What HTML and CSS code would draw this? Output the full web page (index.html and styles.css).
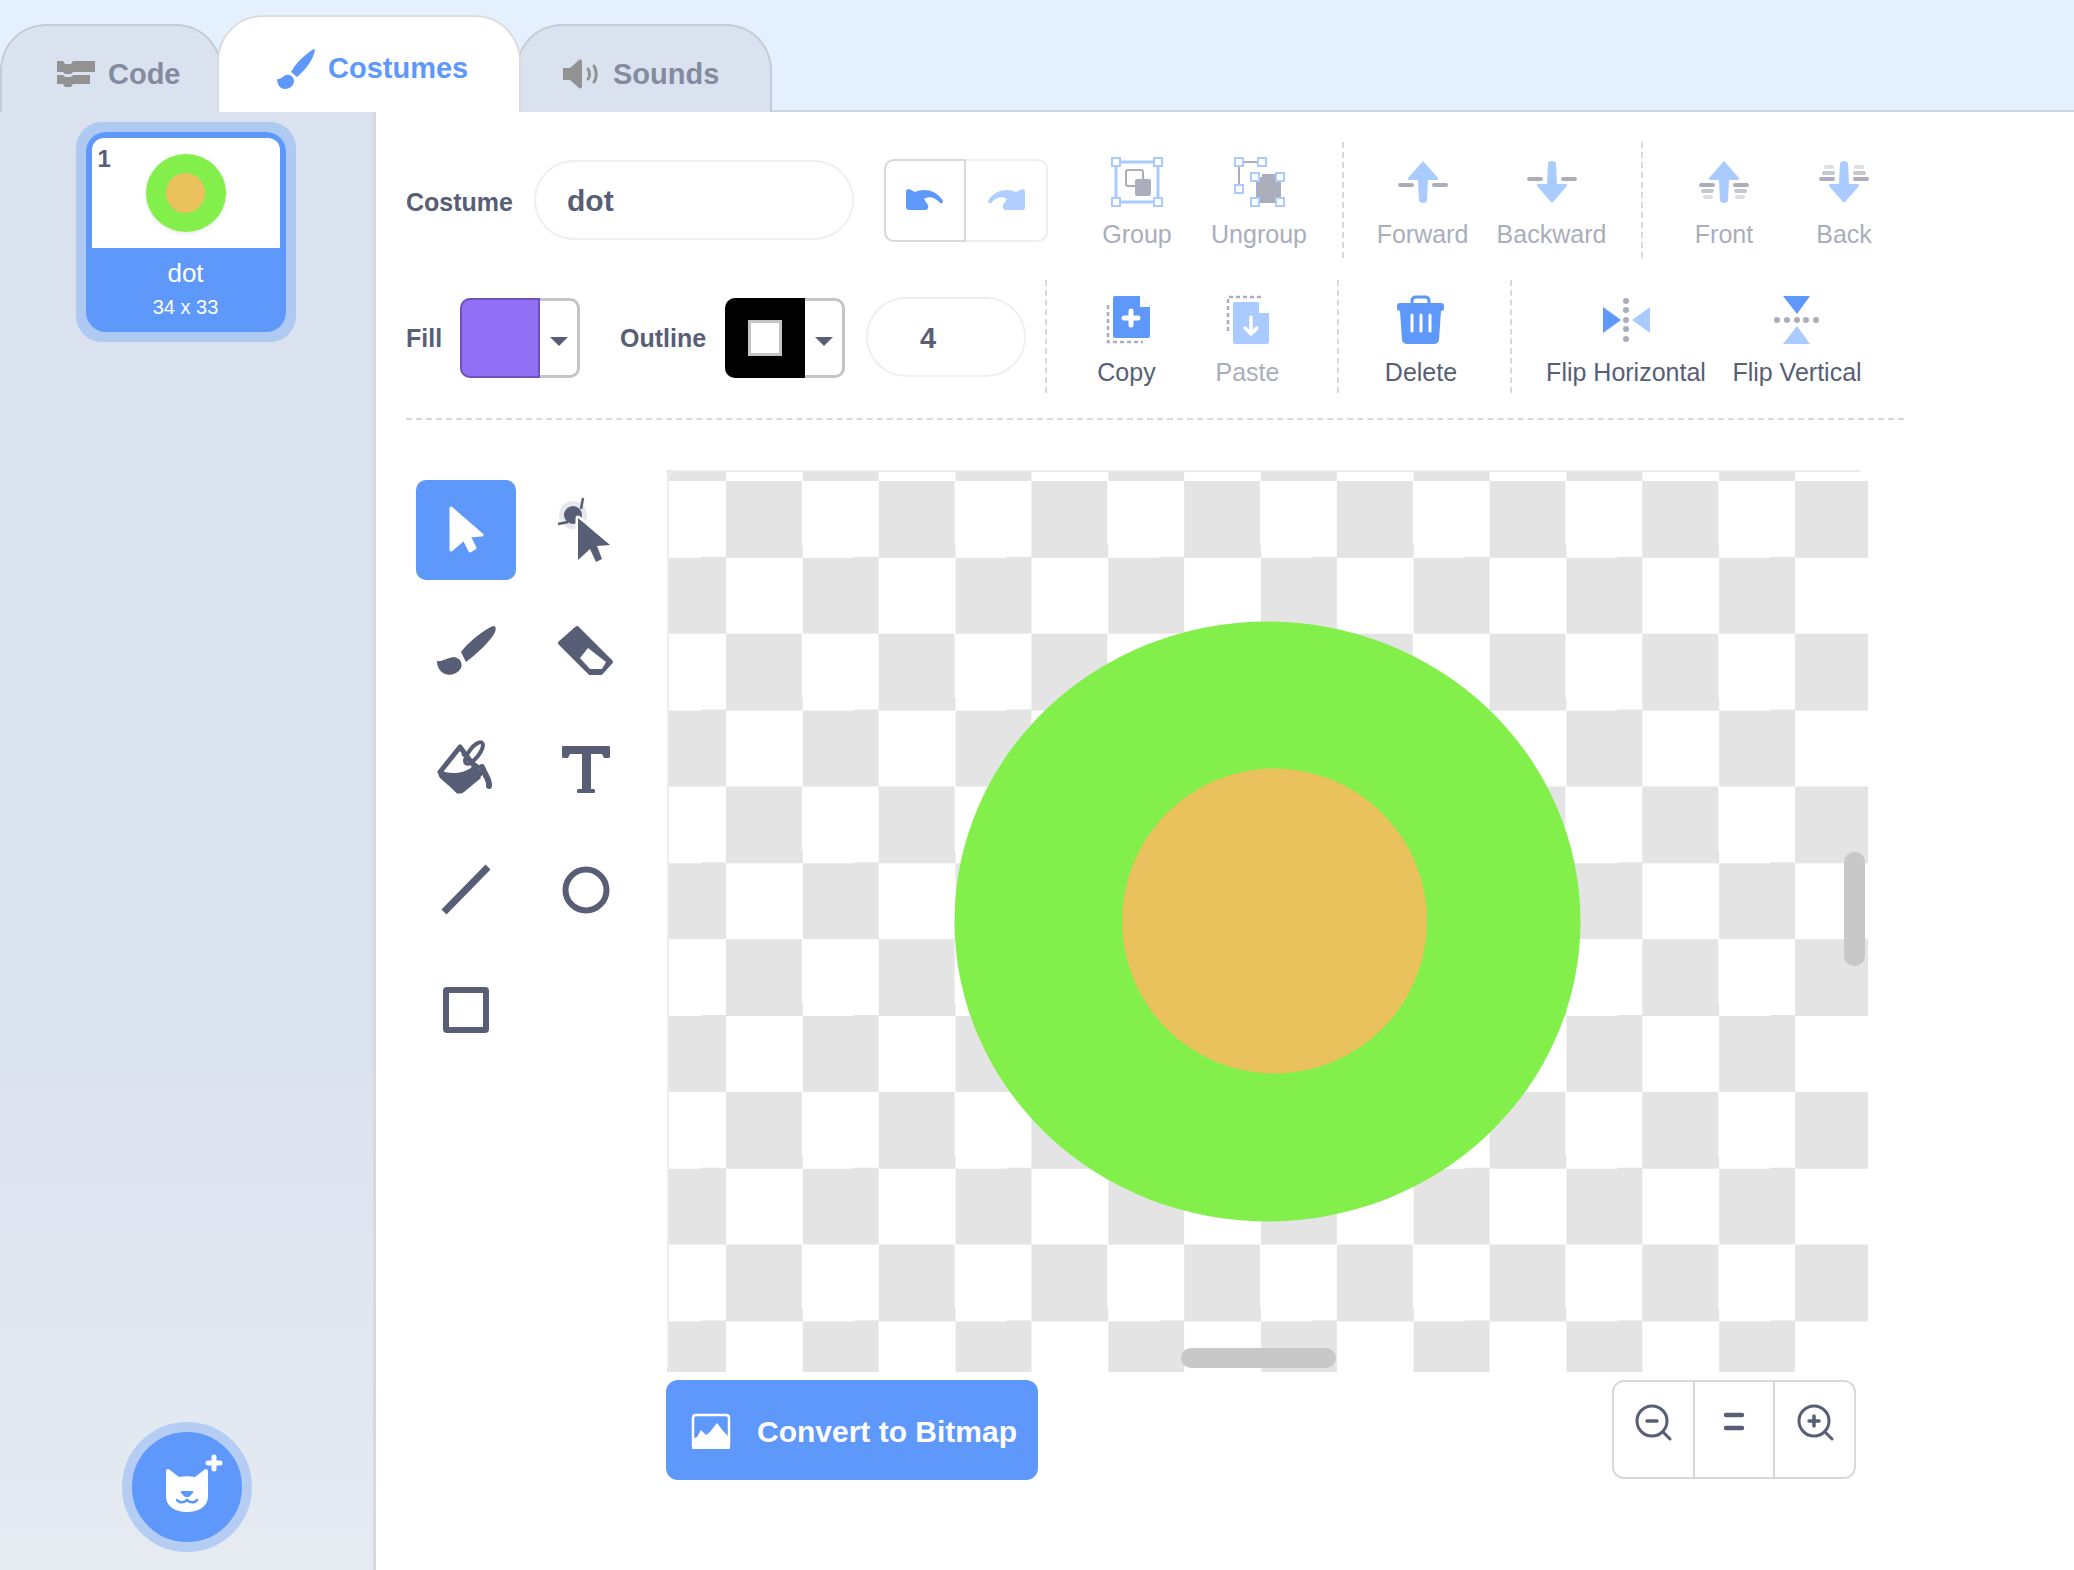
FILE: index.html
```html
<!DOCTYPE html>
<html lang="en">

<head>
    <meta charset="UTF-8">
    <title>Costumes</title>
    <link rel="stylesheet" href="styles.css">
</head>

<body>
    <div class="tabs">
        <div class="tab tab-code">
            <svg class="tab-icon" width="40" height="28" viewBox="0 0 40 28"><path fill="#929292" d="M1 1h6l2 3h6l2-3h22v11H17l-2 2H9l-2-2H1zM1 15h6l2 2h6l2-2h17v9H17l-2 3H9l-2-3H1z"/></svg>
            <span>Code</span>
        </div>
        <div class="tab tab-active">
            <svg class="tab-icon" width="38" height="40" viewBox="0 0 38 40"><path fill="#5e98fb" d="M14 23C18 15 29 4 37 0c1 0 1 2 0 5-3 9-11 18-17 23z"/><path fill="#5e98fb" d="M0 30c3 1 6-3 9-4 4-1 8 2 8 6 0 5-5 8-9 8-5 0-8-5-8-10z"/></svg>
            <span>Costumes</span>
        </div>
        <div class="tab tab-sounds">
            <svg class="tab-icon" width="38" height="30" viewBox="0 0 38 30"><path fill="#929292" d="M0 9h7l9-8c2-1 3 0 3 2v24c0 2-1 3-3 2l-9-8H0z"/><path fill="none" stroke="#929292" stroke-width="3" stroke-linecap="round" d="M25 10c2 3 2 8 0 10M31 7c3 5 3 12 0 16"/></svg>
            <span>Sounds</span>
        </div>
    </div>

    <div class="main">
        <div class="sidebar">
            <div class="card-halo">
                <div class="card">
                    <div class="thumb">
                        <span class="thumb-num">1</span>
                        <div class="thumb-dot"><div class="thumb-core"></div></div>
                    </div>
                    <div class="card-name">dot</div>
                    <div class="card-size">34 x 33</div>
                </div>
            </div>
            <div class="add-btn">
                <svg width="110" height="110" viewBox="0 0 110 110">
                    <path fill="#fff" d="M34 40c0-3 2-4 4-2l9 7c5-1 11-1 16 0l9-7c2-2 4-1 4 2v24c0 11-10 16-21 16s-21-5-21-16z"/>
                    <path fill="#5e98fb" d="M50 59h10c1 0 2 1 1 2l-4 4h-4l-4-4c-1-1 0-2 1-2z"/>
                    <path fill="none" stroke="#5e98fb" stroke-width="2.5" stroke-linecap="round" d="M45 68c2 3 7 3 10 0 3 3 8 3 10 0"/>
                    <path fill="none" stroke="#fff" stroke-width="5" stroke-linecap="round" d="M82 25v12M76 31h12"/>
                </svg>
            </div>
        </div>

        <div class="editor">
            <div class="row row-one">
                <div class="label label-costume">Costume</div>
                <div class="pill pill-name">dot</div>
                <div class="undo">
                    <div class="undo-btn undo-on">
                        <svg width="40" height="24" viewBox="0 0 40 24"><path fill="#5e98fb" d="M1 4q0-3 3-3l2 1 4 2c8-4 21-3 28 9q0 3-3 2c-5-6-11-7-16-4l4 6q1 4-2 5H4q-3 0-3-3z"/></svg>
                    </div>
                    <div class="undo-btn">
                        <svg width="40" height="24" viewBox="0 0 40 24"><path fill="#b0ceff" d="M39 4q0-3-3-3l-2 1-4 2c-8-4-21-3-28 9q0 3 3 2c5-6 11-7 16-4l-4 6q-1 4 2 5h17q3 0 3-3z"/></svg>
                    </div>
                </div>

                <div class="tool-set set-group">
                    <div class="act act-122 off">
                        <svg width="60" height="50" viewBox="0 0 60 50">
                            <path fill="none" stroke="#a9cbff" stroke-width="3" d="M9 5h42v40H9z"/>
                            <g fill="#fff" stroke="#a9cbff" stroke-width="2"><rect x="5" y="1" width="8" height="8"/><rect x="47" y="1" width="8" height="8"/><rect x="5" y="41" width="8" height="8"/><rect x="47" y="41" width="8" height="8"/></g>
                            <rect x="19" y="13" width="17" height="16" rx="2" fill="#fff" stroke="#abaeba" stroke-width="2"/>
                            <rect x="28" y="22" width="16" height="17" rx="2" fill="#abaeba"/>
                        </svg>
                        <div>Group</div>
                    </div>
                    <div class="act act-122 off">
                        <svg width="60" height="50" viewBox="0 0 60 50">
                            <path fill="none" stroke="#abaeba" stroke-width="2" d="M10 5h24M10 5v28"/>
                            <path fill="#abaeba" d="M27 20h6v-3h14v3h5v21h-5v5H30v-5h-3z"/>
                            <g fill="#fff" stroke="#a9cbff" stroke-width="2"><rect x="6" y="1" width="8" height="8"/><rect x="29" y="1" width="8" height="8"/><rect x="6" y="28" width="8" height="8"/><rect x="22" y="16" width="8" height="8"/><rect x="47" y="16" width="8" height="8"/><rect x="22" y="41" width="8" height="8"/><rect x="47" y="41" width="8" height="8"/></g>
                        </svg>
                        <div>Ungroup</div>
                    </div>
                </div>

                <div class="tool-set set-order">
                    <div class="act act-129 off">
                        <svg width="60" height="50" viewBox="0 0 60 50">
                            <path fill="none" stroke="#abaeba" stroke-width="4" stroke-linecap="round" d="M7 28h12M41 28h12"/>
                            <path fill="#a9cbff" d="M30 4l15 17q1 2-2 2h-8l-1 21q-1 2-4 2t-4-2l-1-21h-8q-3 0-2-2z"/>
                        </svg>
                        <div>Forward</div>
                    </div>
                    <div class="act act-129 off">
                        <svg width="60" height="50" viewBox="0 0 60 50">
                            <path fill="none" stroke="#abaeba" stroke-width="4" stroke-linecap="round" d="M7 22h12M41 22h12"/>
                            <path fill="#a9cbff" d="M30 46L15 29q-1-2 2-2h8l1-21q1-2 4-2t4 2l1 21h8q3 0 2 2z"/>
                        </svg>
                        <div>Backward</div>
                    </div>
                </div>

                <div class="tool-set set-layer">
                    <div class="act act-120 off">
                        <svg width="60" height="50" viewBox="0 0 60 50">
                            <path fill="none" stroke="#abaeba" stroke-width="4" stroke-linecap="round" d="M7 28h12M41 28h12"/>
                            <path fill="none" stroke="#c4c7d0" stroke-width="4" stroke-linecap="round" d="M9 34h9M42 34h9"/>
                            <path fill="none" stroke="#dcdee3" stroke-width="4" stroke-linecap="round" d="M11 40h6M43 40h6"/>
                            <path fill="#a9cbff" d="M30 4l15 17q1 2-2 2h-8l-1 21q-1 2-4 2t-4-2l-1-21h-8q-3 0-2-2z"/>
                        </svg>
                        <div>Front</div>
                    </div>
                    <div class="act act-120 off">
                        <svg width="60" height="50" viewBox="0 0 60 50">
                            <path fill="none" stroke="#dcdee3" stroke-width="4" stroke-linecap="round" d="M12 10h6M42 10h6"/>
                            <path fill="none" stroke="#c4c7d0" stroke-width="4" stroke-linecap="round" d="M10 16h9M41 16h9"/>
                            <path fill="none" stroke="#abaeba" stroke-width="4" stroke-linecap="round" d="M7 22h12M41 22h12"/>
                            <path fill="#a9cbff" d="M30 46L15 29q-1-2 2-2h8l1-21q1-2 4-2t4 2l1 21h8q3 0 2 2z"/>
                        </svg>
                        <div>Back</div>
                    </div>
                </div>
            </div>

            <div class="row row-two">
                <div class="label label-fill">Fill</div>
                <div class="swatch">
                    <div class="swatch-color color-purple"></div>
                    <div class="swatch-drop"><i class="caret"></i></div>
                </div>
                <div class="label label-outline">Outline</div>
                <div class="swatch">
                    <div class="swatch-color color-black"><i class="outline-hole"></i></div>
                    <div class="swatch-drop"><i class="caret"></i></div>
                </div>
                <div class="pill pill-num">4</div>

                <div class="tool-set set-clip">
                    <div class="act act-121">
                        <svg width="60" height="50" viewBox="0 0 60 50">
                            <path fill="#5e98fb" d="M18 1h25l10 11v29q0 2-2 2H18q-2 0-2-2V3q0-2 2-2z"/>
                            <path fill="#fff" d="M43 1l10 11H43z"/>
                            <path fill="none" stroke="#fff" stroke-width="5" stroke-linecap="round" d="M34 16v14M27 23h14"/>
                            <path fill="none" stroke="#abaeba" stroke-width="2.5" stroke-dasharray="4 3" d="M11 10v37h35"/>
                        </svg>
                        <div>Copy</div>
                    </div>
                    <div class="act act-121 off">
                        <svg width="60" height="50" viewBox="0 0 60 50">
                            <path fill="#a9cbff" d="M17 7h24l10 11v29q0 2-2 2H17q-2 0-2-2V9q0-2 2-2z"/>
                            <path fill="#fff" d="M41 7l10 11H41z"/>
                            <path fill="none" stroke="#fff" stroke-width="3.5" stroke-linecap="round" stroke-linejoin="round" d="M33 22v17M27 33l6 6 6-6"/>
                            <path fill="none" stroke="#abaeba" stroke-width="2.5" stroke-dasharray="4 3" d="M10 36V2h34"/>
                        </svg>
                        <div>Paste</div>
                    </div>
                </div>

                <div class="tool-set set-del">
                    <div class="act act-120">
                        <svg width="60" height="50" viewBox="0 0 60 50">
                            <path fill="none" stroke="#5e98fb" stroke-width="3" d="M21 9V6q0-4 4-4h9q4 0 4 4v3"/>
                            <path fill="#5e98fb" d="M9 8h41q3 0 3 3v2q0 3-3 3l-2 29q-1 4-5 4H16q-4 0-5-4L9 16q-3 0-3-3v-2q0-3 3-3z"/>
                            <path fill="none" stroke="#fff" stroke-width="3" stroke-linecap="round" d="M21 20v16M30 20v16M39 20v16"/>
                        </svg>
                        <div>Delete</div>
                    </div>
                </div>

                <div class="tool-set set-flip">
                    <div class="act act-172">
                        <svg width="60" height="50" viewBox="0 0 60 50">
                            <path fill="#5e98fb" d="M7 12l18 13-18 13z"/>
                            <path fill="#a9cbff" d="M54 12L36 25l18 13z"/>
                            <g fill="#abaeba"><circle cx="30" cy="6" r="3"/><circle cx="30" cy="15" r="3"/><circle cx="30" cy="25" r="3"/><circle cx="30" cy="34" r="3"/><circle cx="30" cy="44" r="3"/></g>
                        </svg>
                        <div>Flip Horizontal</div>
                    </div>
                    <div class="act act-170">
                        <svg width="60" height="50" viewBox="0 0 60 50">
                            <path fill="#5e98fb" d="M16 1h27L30 19z"/>
                            <path fill="#a9cbff" d="M16 49h27L30 31z"/>
                            <g fill="#abaeba"><circle cx="10" cy="25" r="3"/><circle cx="20" cy="25" r="3"/><circle cx="30" cy="25" r="3"/><circle cx="39" cy="25" r="3"/><circle cx="49" cy="25" r="3"/></g>
                        </svg>
                        <div>Flip Vertical</div>
                    </div>
                </div>
            </div>

            <div class="rule"></div>

            <div class="stage">
                <div class="tools">
                    <div class="tool tool-on">
                        <svg width="100" height="100" viewBox="0 0 100 100"><path fill="#fff" stroke="#fff" stroke-width="3" stroke-linejoin="round" d="M35 28l31 27-13 1 6 12-5 3-6-12-13 11z"/></svg>
                    </div>
                    <div class="tool">
                        <svg width="100" height="100" viewBox="0 0 100 100">
                            <circle cx="37" cy="35" r="14" fill="#e6e8ed"/>
                            <circle cx="37" cy="35" r="9" fill="#575e75"/>
                            <path fill="none" stroke="#575e75" stroke-width="2.5" d="M47 18l-2 11M22 44l10-2"/>
                            <path fill="#575e75" stroke="#fff" stroke-width="5" stroke-linejoin="round" d="M42 38l32 27-13 1 5 13-6 3-6-13-12 11z" paint-order="stroke"/>
                        </svg>
                    </div>
                    <div class="tool">
                        <svg width="100" height="100" viewBox="0 0 100 100">
                            <path fill="#575e75" d="M45 52c7-10 23-22 32-26 4 0 3 5 1 8-5 8-16 19-28 28z"/>
                            <path fill="#575e75" d="M21 61c5 1 9-3 17-4 6 1 9 6 7 11-3 6-11 8-16 6-5-2-8-7-8-13z"/>
                        </svg>
                    </div>
                    <div class="tool">
                        <svg width="100" height="100" viewBox="0 0 100 100">
                            <path fill="#575e75" stroke="#575e75" stroke-width="4" stroke-linejoin="round" d="M41 28L24 43l30 30h11l10-11z"/>
                            <path fill="#fff" d="M52 48l-8 10 10 11h12l4-7z"/>
                        </svg>
                    </div>
                    <div class="tool">
                        <svg width="100" height="100" viewBox="0 0 100 100">
                            <path fill="#575e75" d="M24 50c7 4 22 5 32-3l9 11-17 14c-3 2-5 2-8 0L24 58c-2-2-2-5 0-8z"/>
                            <path fill="none" stroke="#575e75" stroke-width="5" stroke-linejoin="round" d="M44 27L24 52l18 19 22-17z"/>
                            <ellipse cx="58" cy="33" rx="5" ry="13" transform="rotate(38 58 33)" fill="none" stroke="#575e75" stroke-width="4"/>
                            <path fill="none" stroke="#575e75" stroke-width="6" stroke-linecap="round" d="M66 47c2 7 8 12 7 19"/>
                            <path fill="none" stroke="#575e75" stroke-width="2.5" d="M46 34l20 15"/>
                        </svg>
                    </div>
                    <div class="tool">
                        <svg width="100" height="100" viewBox="0 0 100 100">
                            <path fill="#575e75" d="M27 26h46q1 0 1 1v10q0 1-2 1h-4l-2-4H55v35h3q1 0 1 2v1q0 1-1 1H42q-1 0-1-1v-1q0-2 1-2h4V34H34l-2 4h-4q-2 0-2-1V27q0-1 1-1z"/>
                        </svg>
                    </div>
                    <div class="tool">
                        <svg width="100" height="100" viewBox="0 0 100 100"><path stroke="#575e75" stroke-width="7" d="M28 72l44-45"/></svg>
                    </div>
                    <div class="tool">
                        <svg width="100" height="100" viewBox="0 0 100 100"><circle cx="50" cy="50" r="20.5" fill="none" stroke="#575e75" stroke-width="6"/></svg>
                    </div>
                    <div class="tool">
                        <svg width="100" height="100" viewBox="0 0 100 100"><rect x="30" y="30" width="40" height="40" rx="1" fill="none" stroke="#575e75" stroke-width="6"/></svg>
                    </div>
                </div>

                <div class="paper-col">
                    <div class="paper">
                        <div class="paper-edge"></div>
                        <svg class="art" width="1201" height="902" viewBox="0 0 1201 902">
                            <ellipse cx="600.5" cy="451.5" rx="313" ry="300" fill="#83ef4a"/>
                            <circle cx="607.5" cy="451" r="152.5" fill="#e9c25d"/>
                        </svg>
                        <div class="scroll-y"></div>
                        <div class="scroll-x"></div>
                    </div>
                    <div class="paper-foot">
                        <div class="convert">
                            <svg width="40" height="36" viewBox="0 0 40 36">
                                <path fill="none" stroke="#fff" stroke-width="2.5" d="M2 33V5q0-3 3-3h30q3 0 3 3v28"/>
                                <path fill="#fff" d="M1 26l5-2 4-7 5 5 4-3 7-9 6 8 4 4 3 4v8q0 3-3 3H4q-3 0-3-3z"/>
                            </svg>
                            <span>Convert to Bitmap</span>
                        </div>
                        <div class="zoom-group">
                            <div class="zoom-btn">
                                <svg width="40" height="40" viewBox="0 0 40 40">
                                    <circle cx="19" cy="20" r="15" fill="none" stroke="#575e75" stroke-width="3"/>
                                    <path fill="none" stroke="#575e75" stroke-width="3" stroke-linecap="round" d="M30 31l7 7"/>
                                    <path fill="none" stroke="#575e75" stroke-width="3.5" stroke-linecap="round" d="M14 20h10"/>
                                </svg>
                            </div>
                            <div class="zoom-btn">
                                <svg width="40" height="40" viewBox="0 0 40 40">
                                    <path fill="none" stroke="#575e75" stroke-width="4.5" stroke-linecap="round" d="M12 14h16M12 27h16"/>
                                </svg>
                            </div>
                            <div class="zoom-btn">
                                <svg width="40" height="40" viewBox="0 0 40 40">
                                    <circle cx="19" cy="20" r="15" fill="none" stroke="#575e75" stroke-width="3"/>
                                    <path fill="none" stroke="#575e75" stroke-width="3" stroke-linecap="round" d="M30 31l7 7"/>
                                    <path fill="none" stroke="#575e75" stroke-width="3.5" stroke-linecap="round" d="M14 20h10M19 15v10"/>
                                </svg>
                            </div>
                        </div>
                    </div>
                </div>
            </div>
        </div>
    </div>
</body>

</html>
```
FILE: styles.css
```css
*{
    box-sizing:border-box;
    margin:0;
    padding:0;
}
body{
    width:2074px;
    height:1570px;
    overflow:hidden;
    background:#fff;
    color:#575e75;
    font-family:"Liberation Sans",Arial,sans-serif;
}

/* tabs */
.tabs{
    display:flex;
    align-items:flex-end;
    height:112px;
    background:#e5f0ff;
    border-bottom:2px solid #ccd3de;
}
.tab{
    display:flex;
    align-items:center;
    height:88px;
    margin-bottom:-2px;
    padding-top:10px;
    background:#dae2ef;
    border:2px solid #c4cbd8;
    border-bottom:none;
    border-radius:46px 46px 0 0;
    color:#848b9e;
    font-size:29px;
    font-weight:bold;
}
.tab-icon{
    flex:none;
}
.tab-code{
    width:222px;
    padding-left:54px;
    gap:12px;
}
.tab-active{
    position:relative;
    z-index:2;
    width:304px;
    height:97px;
    margin-left:-5px;
    padding-top:8px;
    padding-left:58px;
    gap:13px;
    background:#fff;
    border-color:#dcdcdc;
    color:#5e98fb;
}
.tab-sounds{
    width:256px;
    margin-left:-5px;
    padding-left:45px;
    gap:12px;
}

.main{
    display:flex;
    height:1458px;
}

/* costume list */
.sidebar{
    position:relative;
    display:flex;
    flex-direction:column;
    align-items:center;
    justify-content:space-between;
    width:376px;
    padding:10px 2px 18px 0;
    background:linear-gradient(#dae2ef 60%,#e6ebf2);
    border-right:3px solid #d9d9d9;
}
.card-halo{
    width:220px;
    height:220px;
    padding:10px;
    background:#aec9f2;
    border-radius:26px;
}
.card{
    height:200px;
    padding:6px 6px 0;
    background:#5e98fb;
    border-radius:20px;
    color:#fff;
    text-align:center;
}
.thumb{
    position:relative;
    display:flex;
    align-items:center;
    justify-content:center;
    height:110px;
    background:#fff;
    border-radius:12px 12px 0 0;
}
.thumb-num{
    position:absolute;
    left:6px;
    top:7px;
    color:#575e75;
    font-size:24px;
    font-weight:bold;
}
.thumb-dot{
    display:flex;
    align-items:center;
    justify-content:center;
    width:80px;
    height:78px;
    background:#83ef4a;
    border-radius:50%;
    box-shadow:0 1px 4px rgba(0,0,0,0.12);
}
.thumb-core{
    width:39px;
    height:40px;
    background:#e9c25d;
    border-radius:50%;
}
.card-name{
    margin-top:10px;
    line-height:30px;
    font-size:26px;
}
.card-size{
    margin-top:7px;
    line-height:24px;
    font-size:20px;
}
.add-btn{
    display:flex;
    align-items:center;
    justify-content:center;
    width:130px;
    height:130px;
    margin-left:2px;
    background:#5e98fb;
    border:10px solid #b5cdf3;
    border-radius:50%;
}

/* toolbar */
.editor{
    flex:1;
    padding:30px 0 0 30px;
}
.row{
    display:flex;
    align-items:center;
}
.row-one{
    height:116px;
    margin-bottom:22px;
}
.row-two{
    height:113px;
}
.label{
    flex:none;
    font-size:25px;
    font-weight:bold;
}
.row-one .label{
    padding-top:4px;
}
.row-two .label{
    padding-top:3px;
}
.label-costume{
    width:128px;
}
.label-fill{
    width:54px;
}
.label-outline{
    width:105px;
    margin-left:40px;
}
.pill{
    flex:none;
    height:80px;
    border:2px solid #ecf0f5;
    border-radius:40px;
    font-weight:bold;
}
.pill-name{
    width:320px;
    padding-left:31px;
    line-height:78px;
    font-size:30px;
}
.pill-num{
    width:160px;
    margin-left:21px;
    margin-top:1px;
    padding-left:52px;
    line-height:79px;
    font-size:29px;
}
.undo{
    display:flex;
    flex:none;
    width:164px;
    height:83px;
    margin-left:30px;
    border:2px solid #eceef1;
    border-radius:10px;
}
.undo-btn{
    display:flex;
    align-items:center;
    justify-content:center;
    flex:1;
}
.undo-on{
    flex:none;
    width:82px;
    margin:-2px 0 -2px -2px;
    background:#fff;
    border:2px solid #d9d9d9;
    border-radius:10px 0 0 10px;
}
.swatch{
    display:flex;
    flex:none;
    width:120px;
    height:80px;
    margin-top:2px;
    background:#fff;
    border:3px solid #c4c4c4;
    border-left:none;
    border-radius:10px;
}
.swatch-color{
    display:flex;
    align-items:center;
    justify-content:center;
    flex:none;
    width:80px;
    margin:-3px 0;
    border-radius:10px 0 0 10px;
}
.color-purple{
    background:#9270f6;
    border:2px solid #6f53bd;
}
.color-black{
    background:#000;
}
.outline-hole{
    width:34px;
    height:36px;
    background:#fff;
    border:3px solid #c4c4c4;
}
.swatch-drop{
    display:flex;
    align-items:center;
    justify-content:center;
    flex:1;
    padding-top:7px;
}
.caret{
    width:0;
    height:0;
    border-left:9px solid transparent;
    border-right:9px solid transparent;
    border-top:9px solid #575e75;
}
.tool-set{
    display:flex;
    align-self:stretch;
    flex:none;
    border-right:2px dashed #d9d9d9;
}
.set-group{
    margin-left:28px;
    padding-right:22px;
}
.set-order{
    padding:0 25px 0 14px;
}
.set-layer{
    padding-left:21px;
    border-right:none;
}
.set-clip{
    margin-left:19px;
    padding:0 29px 0 19px;
    border-left:2px dashed #d9d9d9;
}
.set-del{
    padding:0 29px 0 22px;
}
.set-flip{
    padding-left:28px;
    border-right:none;
}
.act{
    display:flex;
    flex-direction:column;
    align-items:center;
    gap:12px;
    padding-top:15px;
    line-height:30px;
    font-size:25px;
    white-space:nowrap;
}
.off{
    color:#a9aebb;
}
.act-120{
    width:120px;
}
.act-121{
    width:121px;
}
.act-122{
    width:122px;
}
.act-129{
    width:129px;
}
.act-170{
    width:170px;
}
.act-172{
    width:172px;
}
.rule{
    width:1498px;
    margin-top:25px;
    border-top:2px dashed #d9d9d9;
}

/* paint area */
.stage{
    display:flex;
    align-items:flex-start;
    margin-top:50px;
}
.tools{
    display:grid;
    grid-template-columns:100px 100px;
    grid-auto-rows:100px;
    gap:20px;
    margin:10px 0 0 10px;
}
.tool{
    height:100px;
    border-radius:10px;
}
.tool-on{
    background:#5e98fb;
}
.paper-col{
    width:1201px;
    margin-left:31px;
}
.paper{
    position:relative;
    height:902px;
    overflow:hidden;
    background:repeating-conic-gradient(#fff 0 25%,#e4e4e4 0 50%) 59px 11px/152.72px 152.72px;
}
.paper-edge{
    position:absolute;
    left:0;
    top:0;
    width:1194px;
    height:100%;
    border-top:2px solid #e9eef2;
    border-left:2px solid #e9eef2;
    border-radius:8px 0 0 8px;
}
.art{
    position:absolute;
    left:0;
    top:0;
}
.scroll-y{
    position:absolute;
    left:1177px;
    top:382px;
    width:21px;
    height:114px;
    background:#c8c8c8;
    border-radius:10px;
}
.scroll-x{
    position:absolute;
    left:514px;
    top:878px;
    width:155px;
    height:20px;
    background:#c8c8c8;
    border-radius:10px;
}
.paper-foot{
    display:flex;
    justify-content:space-between;
    margin-top:8px;
}
.convert{
    display:flex;
    align-items:center;
    gap:26px;
    width:372px;
    height:100px;
    margin-left:-1px;
    padding-left:25px;
    padding-top:1px;
    background:#5e98fb;
    border-radius:12px;
    color:#fff;
    font-size:30px;
    font-weight:bold;
}
.convert span{
    padding-top:2px;
}
.zoom-group{
    display:flex;
    width:244px;
    height:99px;
    margin-right:12px;
    border:2px solid #d9d9d9;
    border-radius:12px;
}
.zoom-btn{
    display:flex;
    justify-content:center;
    flex:1;
    padding-top:19px;
    border-right:2px solid #d9d9d9;
}
.zoom-btn:last-child{
    border-right:none;
}
```
